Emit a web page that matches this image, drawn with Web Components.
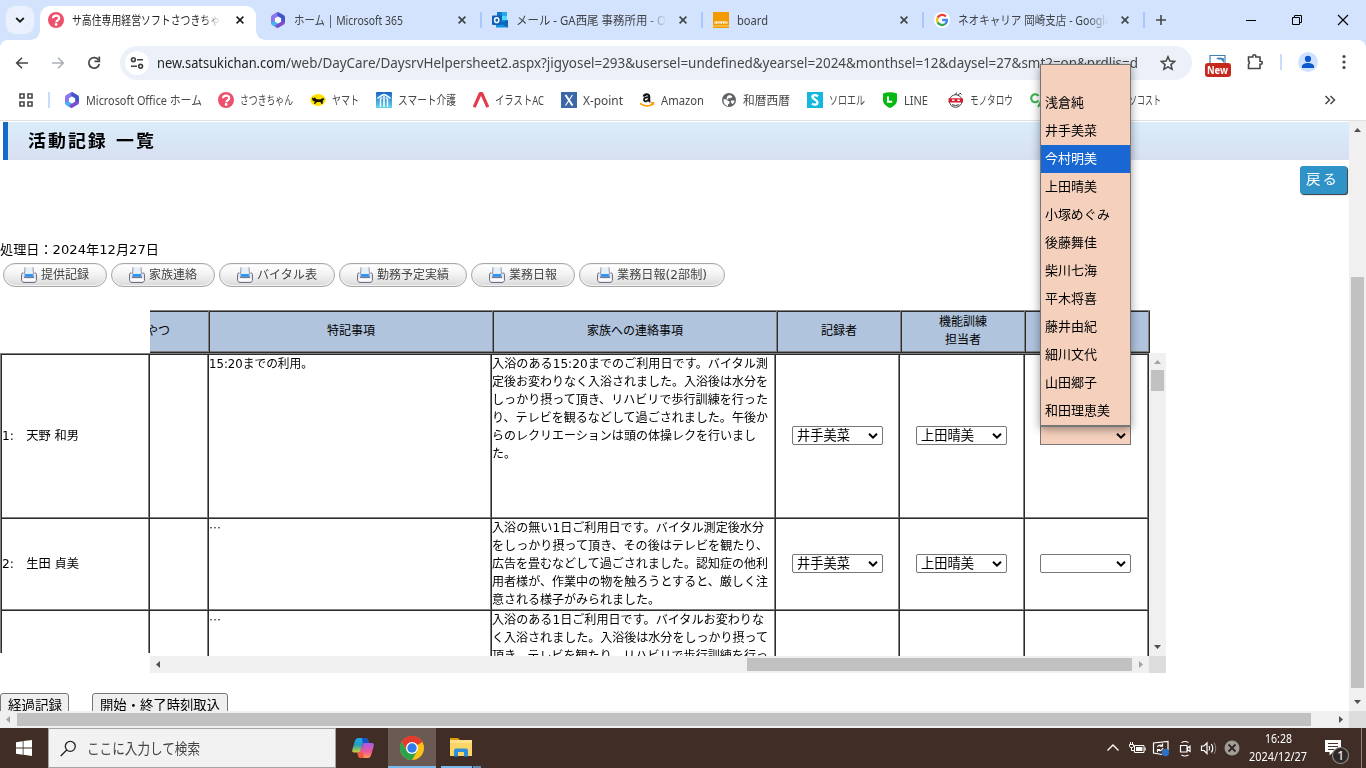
<!DOCTYPE html>
<html lang="ja">
<head>
<meta charset="utf-8">
<title>活動記録 一覧</title>
<style>
html,body{margin:0;padding:0;width:1366px;height:768px;overflow:hidden;background:#fff}
body{font-family:"DejaVu Sans","Noto Sans CJK JP",sans-serif}
</style>
</head>
<body>
<desktop-screen></desktop-screen>
<script>
const UI_FONT = '"Noto Sans","Noto Sans CJK JP",sans-serif';
const PAGE_FONT = '"DejaVu Sans","Noto Sans CJK JP",sans-serif';

function define(name, markup, ready) {
  customElements.define(name, class extends HTMLElement {
    constructor() {
      super();
      this.attachShadow({ mode: 'open' });
    }
    connectedCallback() {
      if (this.done) return;
      this.done = true;
      this.shadowRoot.innerHTML = typeof markup === 'function' ? markup(this) : markup;
      if (ready) ready(this);
    }
  });
}

const MS365 = '<path d="M7.5 0 14.5 4v8L8 16 1.5 12V4z" fill="#5b6fe0"/><path d="M8 0 3 2.6C1.6 3.5 1 4.6 1 6.2V11l3.6-1.8V6.4L10 3.2z" fill="#8a78ef"/><path d="M1 10.5 5 9l5 3.4L7 16 2.6 13.4C1.5 12.6 1 12 1 10.5z" fill="#45b4ec"/><path d="M8 0l5.3 3c1.2.8 1.7 1.7 1.7 3v4.6L11.200 9V6L7 3.500z" fill="#3f55c9"/><path d="M7 16l6-3.200c1.500-.9 2-1.800 2-3.300L11.200 9v.8L5 13.500z" fill="#7f4bd0"/><path d="M4.900 6.200 8 4.500l3.100 1.700v3.600L8 11.600 4.900 9.800z" fill="#fff"/>';
const SATSUKI = '<circle cx="8" cy="8" r="8" fill="#ee4f6b"/><path d="M5 6.300C5 2.700 11.200 2.700 11.200 6.200c0 2-2.900 2.100-2.900 4" fill="none" stroke="#fff" stroke-width="2.200"/><circle cx="8.100" cy="12.500" r="1.400" fill="#fff"/>';

/* name: [width, height, viewBox, body] */
const ICONS = {
  ms365: [16,16,'0 0 16 16',MS365],
  satsuki: [16,16,'0 0 16 16',SATSUKI],
  outlook: [16,16,'0 0 16 16','<path d="M5 0h10v8H5z" fill="#28a8ea"/><path d="M5 4h5v5H5z" fill="#0364b8"/><path d="M10 4h5v5h-5z" fill="#50d9ff"/><path d="M5 0h5v4H5z" fill="#0f78d4"/><path d="M4 8l12 0v7.500H4z" fill="#1490df"/><path d="M16 8v7.500L8 11z" fill="#1066b5"/><rect x="0" y="3.500" width="9.500" height="9.500" rx="1" fill="#0f5fb5"/><ellipse cx="4.700" cy="8.200" rx="2.100" ry="2.400" fill="none" stroke="#fff" stroke-width="1.500"/>'],
  norma: [16,16,'0 0 16 16','<path d="M0 0h16v16H0z" fill="#f39a00"/><path d="M2 9.500v2.500M3.500 9.500v2.500M5 9.500v2.500M7 9.500v2.500M8.500 9.500v2.500M10.500 9.500v2.500M12 9.500v2.500M14 9.500v2.500M2 10h12" stroke="#fff" stroke-width=".8"/><path d="M0 14h16" stroke="#fbd389" stroke-width="1"/>'],
  google: [16,16,'0 0 16 16','<circle cx="8" cy="8" r="8" fill="#fff"/><g fill="none" stroke-width="2.300"><path d="M11.900 4.600A5 5 0 0 0 3.700 5.600" stroke="#ea4335"/><path d="M3.700 5.600a5 5 0 0 0 0 4.800" stroke="#fbbc05"/><path d="M3.700 10.400a5 5 0 0 0 7.600 1.400" stroke="#34a853"/><path d="M11.300 11.800A5 5 0 0 0 13 8H8.200" stroke="#4285f4"/></g>'],
  yamato: [16,16,'0 0 16 16','<ellipse cx="8" cy="8" rx="7.700" ry="6" fill="#ffe100"/><path d="M2 5.500l2 .8L5 5l1 2 4 .5L13 6l1.500 1-1.500 1.500L12.500 12h-1L10.500 10 7 10l-2 2H4l.8-2.500L2.500 8.500z" fill="#15130a"/>'],
  smart: [16,16,'0 0 16 16','<defs><linearGradient id="g" x2="0" y2="1"><stop stop-color="#1766c9"/><stop offset="1" stop-color="#63d3ec"/></linearGradient></defs><rect width="16" height="16" rx="1" fill="url(#g)"/><path d="M1.500 6.500C4 4.500 6 3 8 2.500c2 .5 4 2 6.500 4M8 4v11M4.500 15V8c0-1.500 1-2 1.800-2M11.500 15V8c0-1.500-1-2-1.800-2" fill="none" stroke="#fff" stroke-width="1.500"/>'],
  ac: [16,16,'0 0 16 16','<path d="M1.200 15.200 7 2q1-1.600 2 0l5.800 13.200" fill="none" stroke="#e03c4b" stroke-width="3.200"/>'],
  xpoint: [16,16,'0 0 16 16','<path d="M0 0h16v16H0z" fill="#3c68a8"/><path d="M4.500 3l7 10.500" stroke="#fff" stroke-width="2"/><path d="M11.500 3l-7 10.500" stroke="#fff" stroke-width="1.200"/>'],
  amazon: [16,16,'0 0 16 16','<path d="M4.700 4.600C5.200 2 10.200 1.300 10.200 4.400v4.200c0 .6.400 1 .8 1.400" fill="none" stroke="#111" stroke-width="2.100"/><path d="M9.800 5.200C6.700 5.200 5 6 5 7.700c0 2.300 4 2.200 4.800-.6" fill="none" stroke="#111" stroke-width="1.800"/><path d="M1 11.400c4 3 9 3 12.600.7M11.800 10.800h2.700l-1 2.700" fill="none" stroke="#ff9900" stroke-width="1.500"/>'],
  globe: [16,16,'0 0 16 16','<circle cx="8" cy="8" r="7" fill="#5f6368"/><path d="M2.600 7l3 .5L7 9l1.500.3v2L7 12.500v1.700C4 13.500 2.200 11 2.600 7zM8.500 3l3 1.200-1.500 2L7.500 6 7 8 5.500 6.300 6.500 4zM10 8.500h3.500c0 1.500-1 3-2 3.700L10 10.500z" fill="#fff"/>'],
  soloel: [16,16,'0 0 16 16','<path d="M0 0h16v16H0z" fill="#14b8dd"/><path d="M11 4.300C8 2.300 5.300 3.200 5.500 5.200 5.700 7.500 10.600 7.800 10.500 10.600c-.1 2.200-3 2.800-5.500 1" fill="none" stroke="#fff" stroke-width="2.400"/>'],
  line: [16,16,'0 0 16 16','<path d="M1 1.500Q8-1 15 1.500V8c0 4-3.500 6.500-7 8C4.500 14.500 1 12 1 8z" fill="#06b912"/><path d="M6 4.500v5.200h4.200" fill="none" stroke="#fff" stroke-width="2"/>'],
  mono: [16,16,'0 0 16 16','<circle cx="7.700" cy="9" r="6.300" fill="#fff" stroke="#444" stroke-width="1"/><path d="M.5 6.300h14.500v4.200H.5z" fill="#d61e2e"/><path d="M4 8.300h2.500M9.300 8.300h2.500" stroke="#fff" stroke-width="1.500"/><path d="M4 12.700q3.700 1.600 7.200 0M7.500 3l1-2.500M10 3.300l1.800-2M12 1l1.500 1.500" fill="none" stroke="#333" stroke-width="1"/>'],
  cgreen: [16,16,'0 0 16 16','<path d="M8.500 4A4 4 0 1 0 8.500 8.500" fill="none" stroke="#3bb54a" stroke-width="2.200"/><path d="M8 15l4-7" stroke="#3bb54a" stroke-width="2"/>'],
  close: [16,16,'0 0 16 16','<path d="M4.600 4.600l6.800 6.800M11.400 4.600l-6.800 6.800" stroke="currentColor" stroke-width="1.600"/>'],
  chev: [12,8,'0 0 12 8','<path d="M2.200 2l3.800 3.600L9.800 2" fill="none" stroke="#1f1f1f" stroke-width="1.900"/>'],
  selchev: [12,8,'0 0 12 8','<path d="M2 1.700l4 3.900 4-3.900" fill="none" stroke="#000" stroke-width="2"/>'],
  plus: [14,14,'0 0 14 14','<path d="M7 2v10M2 7h10" stroke="#444746" stroke-width="1.600"/>'],
  min: [12,12,'0 0 12 12','<path d="M1 6.500h10" stroke="#000"/>'],
  restore: [12,12,'0 0 12 12','<path d="M1.500 3.500h7v7h-7zM3.500 3.500v-2h7v7h-2" fill="none" stroke="#000"/>'],
  wclose: [12,12,'0 0 12 12','<path d="M1 1l10 10M11 1L1 11" stroke="#000" stroke-width="1.100"/>'],
  back: [16,16,'0 0 16 16','<path d="M14 8H3M8 2.700L2.700 8 8 13.300" fill="none" stroke="#444746" stroke-width="1.600"/>'],
  fwd: [16,16,'0 0 16 16','<path d="M2 8h11M8 2.700L13.300 8 8 13.300" fill="none" stroke="#aab0b5" stroke-width="1.600"/>'],
  reload: [16,16,'0 0 16 16','<path d="M12.600 5A5.300 5.300 0 1 0 13.300 9" fill="none" stroke="#444746" stroke-width="1.700"/><path d="M13.300 1.500V6.300H8.500" fill="none" stroke="#444746" stroke-width="1.700"/>'],
  tune: [14,14,'0 0 14 14','<g fill="none" stroke="#3c4043" stroke-width="1.600"><circle cx="3.400" cy="3.700" r="1.900"/><path d="M7 3.700h6M1 10.300h6"/><circle cx="10.600" cy="10.300" r="1.900"/></g>'],
  star: [16,16,'0 0 16 16','<path d="M8 1.700l1.900 4.400 4.700.4-3.600 3.100 1.100 4.700L8 11.800l-4.100 2.500L5 9.600 1.400 6.500l4.700-.4z" fill="none" stroke="#444746" stroke-width="1.500"/>'],
  ext: [28,24,'0 0 28 24','<path d="M6 9V1.500h15V9" fill="#fff" stroke="#3f83b5" stroke-width="1.200"/><path d="M12 4.500q3-2 8 0V9l-3-3.500q-3 .5-5-1z" fill="#3f83b5"/><rect x="1" y="9" width="26" height="14" rx="3" fill="#c5281c"/>'],
  puzzle: [18,18,'0 0 18 18','<path d="M2.500 4h4.300V3.200a1.500 1.500 0 0 1 3 0V4h4.200v4.200h.8a1.500 1.500 0 0 1 0 3H14v4.300H2.500v-4.200a2 2 0 0 0 0-3.300z" fill="none" stroke="#444746" stroke-width="1.600"/>'],
  person: [20,20,'0 0 20 20','<circle cx="10" cy="10" r="10" fill="#d0e1fd"/><circle cx="10" cy="6.900" r="3.100" fill="#0b57d0"/><path d="M3.900 16v-1.500c0-4.700 12.200-4.700 12.200 0V16z" fill="#0b57d0"/>'],
  dots: [4,16,'0 0 4 16','<g fill="#444746"><circle cx="2" cy="2.500" r="1.600"/><circle cx="2" cy="8" r="1.600"/><circle cx="2" cy="13.500" r="1.600"/></g>'],
  apps: [14,14,'0 0 14 14','<path d="M1 1h4v4H1zM9 1h4v4H9zM1 9h4v4H1zM9 9h4v4H9z" fill="none" stroke="#444746" stroke-width="1.600"/>'],
  more: [12,10,'0 0 12 10','<path d="M1.500 1l4 4-4 4M6.500 1l4 4-4 4" fill="none" stroke="#444746" stroke-width="1.500"/>'],
  printer: [16,16,'0 0 16 16','<path d="M2.500 6H1.200L.5 7.500v6l1.500 2h12l1.500-2v-6L14.800 6h-1.300" fill="#e4e5ee" stroke="#6f7184"/><path d="M1.500 12.800h13" stroke="#fff" stroke-width="2.200"/><path d="M4 .5h8l.7 7H3.300z" fill="#e6eef8"/><path d="M4 .3L3.500 7.500M12 .3l.5 7.200" stroke="#8a8ea0" stroke-width=".9"/><path d="M4.200 7h7.600l1 2.800H3.200z" fill="#2b95f5"/><path d="M3 10.300h10" stroke="#4a5068" stroke-width=".9"/>'],
  win: [16,16,'0 0 16 16','<path d="M0 2.200l6.700-1v6.400H0zM7.500 1.100L16 0v7.600H7.500zM0 8.400h6.700v6.400L0 13.800zM7.500 8.400H16V16l-8.500-1.200z" fill="#fff"/>'],
  search: [17,17,'0 0 17 17','<circle cx="10.300" cy="6.300" r="5" fill="none" stroke="#222" stroke-width="1.300"/><path d="M6.700 10L.700 16" stroke="#222" stroke-width="1.300"/>'],
  copilot: [24,24,'0 0 24 24','<defs><linearGradient id="a" x2="0" y2="1"><stop stop-color="#18a9ee"/><stop offset=".5" stop-color="#2a9fb8"/><stop offset="1" stop-color="#d6d32e"/></linearGradient><linearGradient id="b" x2="0" y2="1"><stop stop-color="#a45bea"/><stop offset=".6" stop-color="#ee5a94"/><stop offset="1" stop-color="#ff9b4e"/></linearGradient></defs><path d="M7 2h7.500q2 0 2.700 2.500L18 7h-4.500q-1.500 0-2 2L9.500 15q-.6 1.500-2.500 1.500H3Q.5 16.500 1.500 13L4 4.500Q5 2 7 2z" fill="url(#a)"/><path d="M11 2h3.500q2 0 2.700 2.500L18 7h-4.500q-1.500 0-1.700 1z" fill="#1a50c8"/><path d="M17 22H9.500q-2 0-2.500-3l-.7-2.500q2.700 0 3.400-2.200L12 8.200q.5-1.200 1.500-1.200H21q2.500 0 1.600 3.500L20 19.500Q19 22 17 22z" fill="url(#b)"/><path d="M13 22H9.500q-2 0-2.500-3l-.7-2.500h4.200q2 0 1.600 2z" fill="#ee5a3a"/>'],
  chrome: [24,24,'0 0 24 24','<circle cx="12" cy="12" r="12" fill="#fbc116"/><path d="M12 12L1.600 6A12 12 0 0 1 22.400 6z" fill="#e33b2e"/><path d="M12 6H22.400A12 12 0 0 0 1.600 6L7 15z" fill="#e33b2e"/><path d="M1.600 6A12 12 0 0 0 12 24L17.200 15 12 12 6.800 15z" fill="#2ba24c"/><circle cx="12" cy="12" r="6" fill="#fff"/><circle cx="12" cy="12" r="4.700" fill="#2f7de9"/>'],
  folder: [24,20,'0 0 24 20','<path d="M1 1h8l2 2v4H1z" fill="#e39b0b"/><path d="M1 3h22v16H1z" fill="#fbd566"/><path d="M1 3h22v3H1z" fill="#ffe18b"/><path d="M5 19.500v-6q0-2 2-2h10q2 0 2 2v6h-4V15H9v4.500z" fill="#2f8ed8"/>'],
  up: [14,10,'0 0 14 10','<path d="M1.500 7.500L7 2 12.500 7.500" fill="none" stroke="#fff" stroke-width="1.400"/>'],
  battery: [17,14,'0 0 17 14','<path d="M5.500 4.500h9.500v7H5.500z" fill="none" stroke="#fff"/><path d="M7 6h6.500v4H7zM15.500 6.500h1.200v3h-1.200z" fill="#fff"/><path d="M.5 3.500h4v2q0 1-2 1t-2-1zM1.500 1v2.500M3.500 1v2.500M2.500 6.500v3h3" fill="none" stroke="#fff"/>'],
  sync: [18,18,'0 0 18 18','<path d="M10 15.500L1.500 14V4L16 2.500V11" fill="none" stroke="#fff" stroke-width="1.200"/><path d="M5.200 8q2-3 5-1.500M10.500 4.500v2.800H7.700M11 9q-2 4-5 2M5.500 13.200v-2.700h2.700" fill="none" stroke="#fff" stroke-width="1.100"/><circle cx="13.500" cy="13.500" r="3.700" fill="#2b72c4"/>'],
  meet: [14,17,'0 0 14 17','<path d="M2.500 5.500h6.500v6.500H2.500zM9.500 8l2.500-1.800v5.200L9.500 10zM3.500 2.500q3.500-2 7 0M3.500 15q3.500 2 7 0" fill="none" stroke="#fff" stroke-width="1.200"/>'],
  sound: [17,14,'0 0 17 14','<path d="M1.500 5v4.500H4l3 3V2L4 5z" fill="none" stroke="#fff" stroke-width="1.200"/><path d="M9 5q1.500 2.200 0 4.500M11.300 3q3 4.200 0 8.500" fill="none" stroke="#fff" stroke-width="1.200"/><path d="M14 1.500q3.500 5.700 0 11.500" fill="none" stroke="#8d837e"/>'],
  cross: [16,16,'0 0 16 16','<circle cx="8" cy="8" r="7.500" fill="#a39c99"/><path d="M4.500 4.500l7 7M11.500 4.500l-7 7" stroke="#332622" stroke-width="1.800"/>'],
  note: [24,24,'0 0 24 24','<path d="M0 0h16v12H8l-3.500 3.500V12H0z" fill="#fff"/><path d="M3 3.500h10M3 6.500h10M3 9.500h6" stroke="#46332c" stroke-width="1.200"/><circle cx="15.500" cy="15.500" r="8" fill="#2f2a28" stroke="#8b8684" stroke-width="1.200"/>']
};

define('ui-icon', el => {
  const [w, h, vb, body] = ICONS[el.getAttribute('name')];
  return `<style>:host{display:block;flex:none;width:${w}px;height:${h}px}svg{display:block}</style><svg width="${w}" height="${h}" viewBox="${vb}">${body}</svg>`;
});

/* One line of text condensed or widened to the given width. */
define('fit-text', el => `<style>
:host{display:block;flex:none;width:${el.getAttribute('w')}px;white-space:nowrap}
span{display:inline-block;transform-origin:0 50%;vertical-align:top}</style><span><slot></slot></span>`, el => {
  const s = el.shadowRoot.querySelector('span');
  const n = s.getBoundingClientRect().width;
  if (n) s.style.transform = `scaleX(${+el.getAttribute('w') / n})`;
});

define('browser-tab', el => {
  const active = el.hasAttribute('active');
  return `<style>
:host{display:flex;flex:none;box-sizing:border-box;position:relative;align-items:center;height:34px;width:${el.getAttribute('width')}px;padding:0 8px 6px ${el.getAttribute('pad')}px;margin-top:6px;color:${active ? '#1f1f1f' : '#3f4247'}}
:host([active]){background:#fff;border-radius:10px 10px 0 0}
:host([active])::before,:host([active])::after{content:"";position:absolute;bottom:0;width:9px;height:9px}
:host([active])::before{left:-9px;background:radial-gradient(circle at 0 0,#d3e3fd 8.500px,#fff 9px)}
:host([active])::after{right:-9px;background:radial-gradient(circle at 100% 0,#d3e3fd 8.500px,#fff 9px)}
.t{width:150px;margin:2px 0 0 8px;height:20px;font:12px/20px ${UI_FONT};overflow:hidden;${el.hasAttribute('fade') ? '-webkit-mask-image:linear-gradient(90deg,#000 130px,transparent 150px);mask-image:linear-gradient(90deg,#000 130px,transparent 150px)' : ''}}
.x{margin-left:auto}
.s{position:absolute;right:-1px;top:6px;width:2px;height:16px;background:#a8c7fa}
</style><ui-icon name="${el.getAttribute('icon')}"></ui-icon><div class="t"><fit-text w="${el.getAttribute('tw')}">${el.textContent}</fit-text></div><ui-icon class="x" name="close"></ui-icon>${active ? '' : '<div class="s"></div>'}`;
});

define('tab-strip', `<style>
:host{display:flex;height:40px;background:#d3e3fd;box-sizing:border-box;padding-left:6px}
.b{width:28px;height:28px;margin-top:6px;border-radius:9px;background:#eaf1fd;display:flex;align-items:center;justify-content:center;margin-right:6px}
.w{display:flex;margin-left:auto;padding:14px 17px 0 0;gap:34px}
.p{margin:13px 0 0 10px}
</style><div class="b"><ui-icon name="chev"></ui-icon></div>
<browser-tab active fade icon="satsuki" width="216" pad="8" tw="158">サ高住専用経営ソフトさつきちゃん</browser-tab>
<browser-tab icon="ms365" width="225" pad="14" tw="109" style="padding-right:11px">ホーム | Microsoft 365</browser-tab>
<browser-tab fade icon="outlook" width="221" pad="11" tw="157" style="padding-right:11px">メール - GA西尾 事務所用 - Ou</browser-tab>
<browser-tab icon="norma" width="221" pad="11" tw="31" style="padding-right:11px">board</browser-tab>
<browser-tab fade icon="google" width="221" pad="11" tw="153" style="padding-right:11px">ネオキャリア 岡崎支店 - Google</browser-tab>
<ui-icon class="p" name="plus"></ui-icon>
<div class="w"><ui-icon name="min"></ui-icon><ui-icon name="restore"></ui-icon><ui-icon name="wclose"></ui-icon></div>`);

define('nav-toolbar', `<style>
:host{display:block;height:44px;background:#d3e3fd}
.r{display:flex;align-items:center;height:44px;box-sizing:border-box;padding:0 18px 0 14px;background:#fff;border-radius:8px 8px 0 0}
.n{display:flex;gap:20px;width:106px;box-sizing:border-box;padding-top:1px}
.o{display:flex;align-items:center;width:1072px;height:34px;margin-top:2px;border-radius:17px;background:#ecf0f9;box-sizing:border-box;padding:0 16px 0 5px;font:14px/24px ${UI_FONT};color:#474747}
.c{width:24px;height:24px;border-radius:50%;background:#fff;display:flex;align-items:center;justify-content:center;margin-right:8px}
.d{color:#1f1f1f}.st{margin-left:auto}
.e{display:grid;margin:8px 0 0 12px}.e>*{grid-area:1/1}.e b{align-self:end;font:bold 10px/14px ${UI_FONT};color:#fff;padding:0 0 1px 3px}
.l{width:2px;height:16px;background:#c9dcfa;margin:0 16px 0 16px}
</style><div class="r"><div class="n"><ui-icon name="back"></ui-icon><ui-icon name="fwd"></ui-icon><ui-icon name="reload"></ui-icon></div>
<div class="o"><div class="c"><ui-icon name="tune"></ui-icon></div><fit-text class="d" w="129">new.satsukichan.com</fit-text><fit-text w="852">/web/DayCare/DaysrvHelpersheet2.aspx?jigyosel=293&amp;usersel=undefined&amp;yearsel=2024&amp;monthsel=12&amp;daysel=27&amp;smt2=on&amp;prdlis=d</fit-text><ui-icon class="st" name="star"></ui-icon></div>
<div class="e"><ui-icon name="ext"></ui-icon><b><fit-text w="21">New</fit-text></b></div>
<ui-icon name="puzzle" style="margin-left:14px"></ui-icon><div class="l"></div><ui-icon name="person"></ui-icon><ui-icon name="dots" style="margin-left:24px"></ui-icon></div>`);

define('book-mark', el => `<style>
:host{display:flex;flex:none;align-items:center;width:${el.getAttribute('width')}px;font:12px/20px ${UI_FONT};color:#474747}
fit-text{margin:2px 0 0 6px}</style><ui-icon name="${el.getAttribute('icon')}"></ui-icon><fit-text w="${el.getAttribute('tw')}">${el.textContent}</fit-text>`);

define('bookmark-bar', `<style>
:host{display:flex;align-items:center;height:37px;box-sizing:border-box;background:#fff;border-bottom:1px solid #e0e0e0;padding:0 30px 4px 19px}
.l{width:2px;height:16px;background:#c9dcfa;margin:0 14px 0 15px}
.m{margin-left:auto}
</style><ui-icon name="apps"></ui-icon><div class="l"></div>
<book-mark icon="ms365" width="154" tw="116">Microsoft Office ホーム</book-mark>
<book-mark icon="satsuki" width="92" tw="53">さつきちゃん</book-mark>
<book-mark icon="yamato" width="66" tw="27">ヤマト</book-mark>
<book-mark icon="smart" width="97" tw="58">スマート介護</book-mark>
<book-mark icon="ac" width="88" tw="49">イラストAC</book-mark>
<book-mark icon="xpoint" width="78" tw="40">X-point</book-mark>
<book-mark icon="amazon" width="82" tw="43">Amazon</book-mark>
<book-mark icon="globe" width="86" tw="47">和暦西暦</book-mark>
<book-mark icon="soloel" width="75" tw="36">ソロエル</book-mark>
<book-mark icon="line" width="66" tw="24">LINE</book-mark>
<book-mark icon="mono" width="82" tw="43">モノタロウ</book-mark>
<book-mark icon="cgreen" width="77" tw="0"></book-mark><book-mark-text></book-mark-text>
<ui-icon class="m" name="more"></ui-icon>`);
define('book-mark-text', `<style>:host{display:block;margin:2px 0 0 22px;font:12px/20px ${UI_FONT};color:#474747}</style><fit-text w="32">ソコスト</fit-text>`);

/* axis, thumb start, thumb length, and which arrow is dimmed */
define('scroll-bar', el => {
  const v = el.getAttribute('axis') === 'v';
  const tri = (d, dim) => `<svg width="17" height="17" viewBox="0 0 17 17"><path d="${d}" fill="${dim ? '#a3a3a3' : '#505050'}"/></svg>`;
  const g = k => el.getAttribute(k);
  return `<style>
:host{display:flex;flex:none;flex-direction:${v ? 'column' : 'row'};background:#f0f0f0;${v ? 'width' : 'height'}:17px}
svg{display:block;flex:none}
.t{flex:none;background:#c1c1c1;${v ? `width:13px;margin:${g('start')}px 2px 0;height:${g('len')}px` : `height:13px;margin:2px 0 2px ${g('start')}px;width:${g('len')}px`}}
.e{margin-${v ? 'top' : 'left'}:auto}
</style>${tri(v ? 'M5 11l3.500-4 3.500 4z' : 'M10 5v7L6 8.500z', g('dim') === 'start')}<div class="t"></div><div class="e">${tri(v ? 'M5 6l3.500 4L12 6z' : 'M7 5v7l4-3.500z', g('dim') === 'end')}</div>`;
});

define('print-button', el => `<style>
:host{display:flex;flex:none;align-items:center;box-sizing:border-box;width:${el.getAttribute('width')}px;height:24px;border:1px solid #a6a6a6;border-radius:12px;background:linear-gradient(#fff,#f4f4f4 45%,#d9d9d9);padding-left:17px;font:12px/20px ${PAGE_FONT};color:#444;box-shadow:inset 0 0 0 1px #f2f2f2}
fit-text{margin-left:4px}</style><ui-icon name="printer"></ui-icon><fit-text w="${el.getAttribute('tw')}">${el.textContent}</fit-text>`);

define('staff-select', el => `<style>
:host{display:flex;align-items:center;box-sizing:border-box;width:91px;height:19px;margin-bottom:1px;border:1px solid #767676;border-radius:2px;background:#fff;font:13.300px/17px ${PAGE_FONT};color:#000;padding:0 3px 0 4px;overflow:visible}
:host([open]){background:#f5d0bd;border-radius:0}
ui-icon{margin-left:auto}
</style><slot></slot><ui-icon name="selchev"></ui-icon>`);

define('option-list', `<style>
:host{display:block;box-sizing:border-box;width:91px;height:363px;border:1px solid #767676;border-bottom-width:2px;background:#f5d0bd;box-shadow:0 2px 9px rgba(0,0,0,.4);font:13px/27px ${PAGE_FONT};color:#000}
div{height:28px;padding-left:4px;overflow:hidden}.z{height:24px}.s{background:#1967d2;color:#fff}
</style><div class="z"></div>` + ['浅倉純','井手美菜','今村明美','上田晴美','小塚めぐみ','後藤舞佳','柴川七海','平木将喜','藤井由紀','細川文代','山田郷子','和田理恵美']
  .map((n, i) => `<div class="${i === 2 ? 's' : ''}"><fit-text w="${n.length * 13}">${n}</fit-text></div>`).join(''));

const CELL = `.c{box-sizing:border-box;box-shadow:inset -1px -1px #2c2c2c,inset -2px -2px #808080;padding:0 2px 2px 0;overflow:hidden;display:flex;align-items:center;justify-content:center}`;
define('record-header', `<style>
:host{display:grid;width:1000px;height:43px;box-sizing:border-box;border-top:1px solid #808080;box-shadow:inset 0 1px #2c2c2c;background:#b0c4de;grid-template-columns:60px 284px 284px 124px 124px 124px;font:12px/18px ${PAGE_FONT}}
${CELL}.c{flex-direction:column;padding-top:1px;padding-bottom:3px}.o{align-items:flex-start}.o span{margin-left:-16px}
</style><div class="c o"><span>おやつ</span></div><div class="c">特記事項</div><div class="c">家族への連絡事項</div><div class="c">記録者</div><div class="c"><div>機能訓練</div><div>担当者</div></div><div class="c"></div>`);

define('name-column', `<style>
:host{display:block;width:150px;height:300px;overflow:hidden;box-sizing:border-box;border-left:1px solid #808080;border-top:1px solid #808080;font:12px/18px ${PAGE_FONT}}
.g{display:grid;border-left:1px solid #2c2c2c;border-top:1px solid #2c2c2c;grid-template-rows:164px 92px 92px}
${CELL}.c{justify-content:flex-start}
</style><div class="g"><div class="c"><fit-text w="77">1:　天野 和男</fit-text></div><div class="c"><fit-text w="77">2:　生田 貞美</fit-text></div><div class="c"></div></div>`);

const lines = a => a.map(([t, w]) => `<fit-text w="${w}">${t}</fit-text>`).join('');
const fam = a => `<div class="c t"><div>${lines(a)}</div></div>`;
const sel = (n, o = '') => `<div class="c${n ? '' : ' l'}"><staff-select${o}>${n ? `<fit-text w="53">${n}</fit-text>` : ''}</staff-select></div>`;
define('record-body', `<style>
:host{display:block;width:999px;height:303px;overflow:hidden;box-sizing:border-box;border-top:1px solid #808080;font:12px/18px ${PAGE_FONT}}
.g{display:grid;border-top:1px solid #2c2c2c;grid-template:164px 92px 92px/59px 283px 284px 124px 125px 124px}
${CELL}.l{padding-right:4px}.t{align-items:flex-start;justify-content:flex-start}.t fit-text{height:18px}
.e{font-family:"Noto Sans CJK JP",sans-serif}
</style><div class="g">
<div class="c"></div><div class="c t"><fit-text w="104">15:20までの利用。</fit-text></div>
${fam([['入浴のある15:20までのご利用日です。バイタル測',276],['定後お変わりなく入浴されました。入浴後は水分を',276],['しっかり摂って頂き、リハビリで歩行訓練を行った',276],['り、テレビを観るなどして過ごされました。午後か',276],['らのレクリエーションは頭の体操レクを行いまし',264],['た。',24]])}
${sel('井手美菜')}${sel('上田晴美')}${sel('', ' open')}
<div class="c"></div><div class="c t e"><fit-text w="12">…</fit-text></div>
${fam([['入浴の無い1日ご利用日です。バイタル測定後水分',272],['をしっかり摂って頂き、その後はテレビを観たり、',276],['広告を畳むなどして過ごされました。認知症の他利',276],['用者様が、作業中の物を触ろうとすると、厳しく注',276],['意される様子がみられました。',168]])}
${sel('井手美菜')}${sel('上田晴美')}${sel('')}
<div class="c"></div><div class="c t e"><fit-text w="12">…</fit-text></div>
${fam([['入浴のある1日ご利用日です。バイタルお変わりな',272],['く入浴されました。入浴後は水分をしっかり摂って',276],['頂き、テレビを観たり、リハビリで歩行訓練を行っ',276]])}
<div class="c"></div><div class="c"></div><div class="c"></div></div>`);

define('record-table', `<style>
:host{display:grid;grid-template:43px 303px 17px/150px 999px 17px;align-items:start}
.h{grid-area:1/2/2/4}.n{grid-area:2/1}.b{grid-area:2/2}.v{grid-area:2/3;height:303px}.s{grid-area:3/2}.k{grid-area:3/3;height:17px;background:#dcdcdc}
</style><record-header class="h"></record-header><name-column class="n"></name-column><record-body class="b"></record-body>
<scroll-bar class="v" axis="v" start="0" len="21" dim="start"></scroll-bar><scroll-bar class="s" axis="h" start="580" len="385" dim="end"></scroll-bar><div class="k"></div>`);

define('activity-page', `<style>
:host{display:block;width:1349px;height:590px;overflow:hidden;background:#fff;color:#000;font:13px/18px ${PAGE_FONT}}
h1{box-sizing:border-box;margin:1px 0 0 3px;height:38px;border-left:5px solid #1569c7;background:linear-gradient(#daedfb,#d7dff1);padding-left:20px;font:bold 17.500px/38px ${PAGE_FONT};letter-spacing:2px}
.r{display:flex;justify-content:flex-end;height:80px;box-sizing:border-box;padding:6px 2px 0}
.k{box-sizing:border-box;width:47px;height:28px;border-radius:3px;background:#2f93c8;color:#fff;font:14px/27px ${PAGE_FONT};letter-spacing:2px;padding-left:6px;box-shadow:1px 1px 1px #333}
.p{display:flex;gap:4px;padding:3px 3px 0;margin-top:1px;height:45px;align-items:flex-start}
.d{height:18px;padding-top:1px}
.f{display:flex;gap:23px;margin-top:20px}
.f div{box-sizing:border-box;height:25px;border:1px solid #767676;border-radius:3px;background:#efefef;font:13.300px/23px ${PAGE_FONT};padding-left:7px}
record-table{margin-top:2px}
</style><h1><fit-text w="128">活動記録 一覧</fit-text></h1>
<div class="r"><div class="k"><fit-text w="33">戻る</fit-text></div></div>
<div class="d"><fit-text w="159">処理日：2024年12月27日</fit-text></div>
<div class="p"><print-button width="104" tw="48">提供記録</print-button><print-button width="104" tw="48">家族連絡</print-button><print-button width="116" tw="60">バイタル表</print-button><print-button width="128" tw="72">勤務予定実績</print-button><print-button width="104" tw="48">業務日報</print-button><print-button width="146" tw="90">業務日報(2部制)</print-button></div>
<record-table></record-table>
<div class="f"><div style="width:69px"><fit-text w="54">経過記録</fit-text></div><div style="width:136px"><fit-text w="120">開始・終了時刻取込</fit-text></div></div>`);

define('task-bar', `<style>
:host{display:flex;height:40px;background:#3f2d26;color:#fff;font:12px/18px ${UI_FONT}}
.a{display:flex;align-items:center;justify-content:center;box-sizing:border-box}
.q{display:flex;align-items:center;box-sizing:border-box;width:288px;border:1px solid #a9a3a0;background:#f2f2f2;color:#444;font:15px/20px ${UI_FONT};padding-left:11px}
.q fit-text{margin-left:10px}
.on{background:#6a5a53;border-bottom:2px solid #76b9ed;padding-top:2px}
.f{display:grid;width:48px;grid-template-rows:38px 2px;justify-items:center;align-items:center;padding-left:1px}
.u{display:grid;grid-template-columns:31px 1px 8px;height:2px;width:40px}
.u i:nth-child(1){background:#76b9ed}.u i:nth-child(3){background:#5c8db5}
.t{display:flex;align-items:center;margin-left:auto;width:260px}
.k{width:60px;margin-left:9px;font-size:12px;line-height:18px}
.k fit-text:first-child{margin-left:16px}
.n{display:grid;margin-left:16px;padding-top:8px}.n>*{grid-area:1/1}.n span{font:13px/16px ${UI_FONT};margin:7px 0 0 12px}
.e{width:1px;height:40px;background:#8f8580;margin-left:12px}
</style><div class="a" style="width:48px"><ui-icon name="win"></ui-icon></div>
<div class="q"><ui-icon name="search"></ui-icon><fit-text w="113">ここに入力して検索</fit-text></div>
<div class="a" style="width:52px;padding-left:2px"><ui-icon name="copilot"></ui-icon></div>
<div class="a on" style="width:48px"><ui-icon name="chrome"></ui-icon></div>
<div class="f"><ui-icon name="folder"></ui-icon><div class="u"><i></i><i></i><i></i></div></div>
<div class="t"><ui-icon name="up"></ui-icon><ui-icon name="battery" style="margin-left:9px"></ui-icon><ui-icon name="sync" style="margin-left:6px"></ui-icon><ui-icon name="meet" style="margin-left:8px"></ui-icon><ui-icon name="sound" style="margin-left:8px"></ui-icon><ui-icon name="cross" style="margin-left:7px"></ui-icon>
<div class="k"><fit-text w="27">16:28</fit-text><fit-text w="58">2024/12/27</fit-text></div>
<div class="n"><ui-icon name="note"></ui-icon><span>1</span></div><div class="e"></div></div>`);

define('desktop-screen', `<style>
:host{display:block;width:1366px;height:768px;position:relative;overflow:hidden}
.v{display:grid;grid-template:590px 17px/1349px 17px}
.k{background:#dcdcdc}
option-list{position:absolute;left:1040px;top:64px}
</style><tab-strip></tab-strip><nav-toolbar></nav-toolbar><bookmark-bar></bookmark-bar>
<div class="v"><activity-page></activity-page><scroll-bar axis="v" start="139" len="411"></scroll-bar><scroll-bar axis="h" start="0" len="1294" dim="start"></scroll-bar><div class="k"></div></div>
<task-bar></task-bar><option-list></option-list>`);
</script>
</body>
</html>
